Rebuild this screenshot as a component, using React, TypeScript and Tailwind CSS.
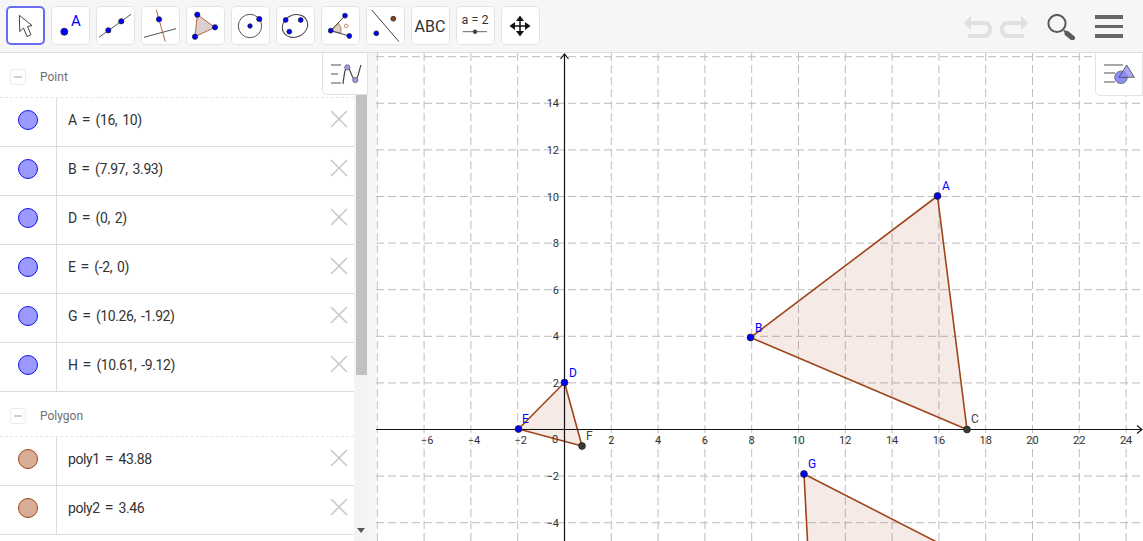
import type { ReactNode } from "react";

const BLUE = "#0000ff";
const BROWN = "#a0441a";
const DARK = "#3a3a3a";

const Dot = ({ x, y, r = 3.5, fill = BLUE }: { x: number; y: number; r?: number; fill?: string }) => (
  <circle cx={x} cy={y} r={r} fill={fill} stroke="#1c1c3c" strokeWidth={0.8} />
);

const toolIcons: ReactNode[] = [
  <path key="move" d="M14.3 9.3 L14.8 25.6 L18.5 22 L22 30.5 L26 28.7 L22.5 20.5 L27 19.5 Z" fill="#fff" stroke="#444" strokeWidth={1} />,
  <g key="point">
    <Dot x={14.3} y={25.7} />
    <text x={26} y={19.7} textAnchor="middle" fontSize={15} fill={BLUE} fontFamily="Roboto, sans-serif">A</text>
  </g>,
  <g key="line">
    <line x1={4} y1={31.3} x2={36} y2={8.3} stroke="#555" strokeWidth={1} />
    <Dot x={13.3} y={24.3} r={2.6} />
    <Dot x={26.3} y={15.3} r={2.6} />
  </g>,
  <g key="perp">
    <line x1={16.3} y1={4} x2={25.3} y2={35.7} stroke="#b5693f" strokeWidth={1} />
    <line x1={4} y1={31.3} x2={36} y2={22.7} stroke="#555" strokeWidth={1} />
    <Dot x={19} y={13.3} r={2.6} />
  </g>,
  <g key="polygon">
    <path d="M12.3 8.7 L30 21.3 L10 30.7 Z" fill="#dbd0cb" stroke="#b5693f" strokeWidth={1} />
    <Dot x={12.3} y={8.7} r={2.6} />
    <Dot x={30} y={21.3} r={2.6} />
    <Dot x={10} y={30.7} r={2.6} />
  </g>,
  <g key="circle">
    <circle cx={20} cy={20} r={11.7} fill="none" stroke="#555" strokeWidth={1} />
    <Dot x={20} y={20} r={2.2} />
    <Dot x={29.3} y={13} r={2.6} />
  </g>,
  <g key="conic">
    <ellipse cx={20} cy={20} rx={13} ry={11} transform="rotate(-25 20 20)" fill="none" stroke="#444" strokeWidth={1} />
    <Dot x={10.7} y={14} r={2.4} />
    <Dot x={25.7} y={14} r={2.4} />
    <Dot x={14.3} y={25.7} r={2.4} />
  </g>,
  <g key="angle">
    <path d="M10.7 24.7 L18.6 17.4 A10.5 10.5 0 0 1 20.8 27.2 Z" fill="#dbd0cb" stroke="#b5693f" strokeWidth={0.8} />
    <line x1={10.7} y1={24.7} x2={25} y2={9.7} stroke="#444" strokeWidth={1} />
    <line x1={10.7} y1={24.7} x2={29.3} y2={30} stroke="#444" strokeWidth={1} />
    <circle cx={26.2} cy={20} r={1.8} fill="none" stroke="#b5693f" strokeWidth={0.8} />
    <Dot x={10.7} y={24.7} r={2.4} />
    <Dot x={25} y={9.7} r={2.4} />
    <Dot x={29.3} y={30} r={2.4} />
  </g>,
  <g key="reflect">
    <line x1={6.7} y1={4} x2={34} y2={35.7} stroke="#444" strokeWidth={1} />
    <Dot x={28.3} y={12.7} r={2.4} fill="#99400f" />
    <Dot x={11.3} y={27.3} r={2.4} />
  </g>,
  <text key="abc" x={20} y={26} textAnchor="middle" fontSize={16} fill="#333" fontFamily="Roboto, sans-serif">ABC</text>,
  <g key="slider">
    <text x={20} y={18} textAnchor="middle" fontSize={12.5} fill="#333" fontFamily="Roboto, sans-serif">a = 2</text>
    <line x1={7.7} y1={25.7} x2={32} y2={25.7} stroke="#666" strokeWidth={1} />
    <circle cx={20} cy={25.7} r={2.2} fill="#444" />
  </g>,
  <g key="pan" fill="#111">
    <path d="M20 12 V28 M12 20 H28" stroke="#111" strokeWidth={1.5} />
    <path d="M20 9.5 L24 15 H16 Z M20 30.5 L24 25 H16 Z M9.5 20 L15 16 V24 Z M30.5 20 L25 16 V24 Z" />
  </g>,
];

const ToolButton = ({ active, children }: { active?: boolean; children: ReactNode }) => (
  <div
    className={
      active
        ? "w-[39px] h-[39px] shrink-0 rounded-[5px] shadow-[inset_0_0_0_2px_#6b6bf0] bg-white"
        : "w-[39px] h-[39px] shrink-0 rounded-[5px] shadow-[inset_0_0_0_1px_#e3e3e3] bg-white"
    }
  >
    <svg viewBox="1 0 39 39" width="39" height="39" className="block">
      {children}
    </svg>
  </div>
);

const Toolbar = () => (
  <div className="h-[53px] shrink-0 flex items-start justify-between pt-[6px] pl-[6px] pr-[20px] bg-[#f6f6f6] border-b border-[#dcdcdc]">
    <div className="flex gap-[6px]">
      {toolIcons.map((icon, i) => (
        <ToolButton key={i} active={i === 0}>
          {icon}
        </ToolButton>
      ))}
    </div>
    <div className="flex items-start gap-[19px] pt-[8px]">
      <div className="flex gap-[8px]">
        <svg width="28" height="26" viewBox="0 0 28 26" fill="none">
          <path d="M2 9 H20 Q26 9 26 15 Q26 22 20 22 H4" stroke="#e0e0e0" strokeWidth={4} />
          <path d="M0 9 L7 1.5 V16.5 Z" fill="#e0e0e0" />
        </svg>
        <svg width="28" height="26" viewBox="0 0 28 26" fill="none">
          <path d="M26 9 H8 Q2 9 2 15 Q2 22 8 22 H24" stroke="#e0e0e0" strokeWidth={4} />
          <path d="M28 9 L21 1.5 V16.5 Z" fill="#e0e0e0" />
        </svg>
      </div>
      <svg width="29" height="26" viewBox="0 0 29 26" fill="none">
        <circle cx="10" cy="9.5" r="8.6" stroke="#5b5b5b" strokeWidth={2} />
        <path d="M17 16.5 L19.5 19" stroke="#5b5b5b" strokeWidth={2} />
        <path d="M20 19.5 L25.5 24" stroke="#5b5b5b" strokeWidth={5} strokeLinecap="round" />
      </svg>
      <div className="flex flex-col gap-[6px] w-[28px] pt-[1px]">
        <div className="h-[3.5px] bg-[#666]" />
        <div className="h-[3.5px] bg-[#666]" />
        <div className="h-[3.5px] bg-[#666]" />
      </div>
    </div>
  </div>
);

const GroupHeader = ({ title }: { title: string }) => (
  <div className="h-[45px] flex items-center pt-[4px] border-b border-dashed border-[#e6e6e6]">
    <div className="ml-[10px] w-[16px] h-[16px] rounded-[3px] border border-[#ececec] flex items-center justify-center">
      <div className="w-[8px] h-[2px] bg-[#d0d0d0]" />
    </div>
    <span className="ml-[14px] text-[12px] text-[#6e6e6e]">{title}</span>
  </div>
);

const ObjectRow = ({ name, value, poly }: { name: string; value: string; poly?: boolean }) => (
  <div className="h-[49px] flex border-b border-[#dcdcdc]">
    <div className="w-[57px] shrink-0 flex items-center justify-center pb-[4px] border-r border-[#dcdcdc]">
      <div
        className={
          poly
            ? "w-[20px] h-[20px] rounded-full bg-[#d8ad98] border border-[#a0441a]"
            : "w-[20px] h-[20px] rounded-full bg-[#9999ff] border border-[#1414e6]"
        }
      />
    </div>
    <div className="flex-1 flex items-center pl-[11px] pb-[4px] text-[14px] tracking-[-0.4px] [word-spacing:2px] text-[#333]">
      <span>{name}</span>
      <span className="mx-[5px] text-[16px] tracking-normal leading-none">=</span>
      <span>{value}</span>
    </div>
    <svg width="18" height="18" viewBox="0 0 18 18" className="mt-[12px] mr-[6px]" stroke="#c8c8c8" strokeWidth={1.6}>
      <path d="M1 1 L17 17 M17 1 L1 17" />
    </svg>
  </div>
);

const AlgebraPanel = () => (
  <div className="w-[368px] shrink-0 relative flex bg-white overflow-hidden">
    <div className="w-[354px] shrink-0">
      <GroupHeader title="Point" />
      <ObjectRow name="A" value="(16, 10)" />
      <ObjectRow name="B" value="(7.97, 3.93)" />
      <ObjectRow name="D" value="(0, 2)" />
      <ObjectRow name="E" value="(-2, 0)" />
      <ObjectRow name="G" value="(10.26, -1.92)" />
      <ObjectRow name="H" value="(10.61, -9.12)" />
      <GroupHeader title="Polygon" />
      <ObjectRow name="poly1" value="43.88" poly />
      <ObjectRow name="poly2" value="3.46" poly />
    </div>
    <div className="flex-1 bg-[#f4f4f4] flex flex-col items-center">
      <div className="w-[11px] h-[322px] bg-[#c1c1c1]" />
      <div className="mt-[153px] w-0 h-0 border-x-[4px] border-x-transparent border-t-[5px] border-t-[#555]" />
    </div>
    <div className="absolute top-0 right-0 w-[46px] h-[42px] bg-white rounded-bl-[5px] border-b border-l border-r border-[#e2e2e2]">
      <svg width="46" height="42" viewBox="323 53 46 42" fill="none">
        <path d="M331 65 H341 M331 74 H338 M331 83 H341" stroke="#a8a8a8" strokeWidth={1.8} />
        <path d="M343 84 Q345 66 347.3 67 C350 67 352 80 355.3 80 C358 80 359 70 361 65" stroke="#444" strokeWidth={1.2} />
        <circle cx={347.3} cy={67.3} r={2.6} fill="#9a9af5" stroke="#555" strokeWidth={0.7} />
        <circle cx={355.3} cy={80} r={2.6} fill="#9a9af5" stroke="#555" strokeWidth={0.7} />
      </svg>
    </div>
  </div>
);

const xAt = (n: number) => 564.5 + 23.4 * n;
const yAt = (n: number) => 429.5 - 23.3 * n;
const gridX = [-8, -6, -4, -2, 2, 4, 6, 8, 10, 12, 14, 16, 18, 20, 22, 24];
const gridY = [16, 14, 12, 10, 8, 6, 4, 2, -2, -4];

const points = [
  { n: "A", x: 937.5, y: 196, lx: 942, ly: 190, c: BLUE },
  { n: "B", x: 750.5, y: 337.5, lx: 755, ly: 332, c: BLUE },
  { n: "C", x: 967, y: 429.5, lx: 971, ly: 423, c: "#444" },
  { n: "D", x: 564.5, y: 382.5, lx: 569, ly: 377, c: BLUE },
  { n: "E", x: 518.5, y: 429, lx: 522, ly: 423, c: BLUE },
  { n: "F", x: 582, y: 446, lx: 586, ly: 440, c: "#444" },
  { n: "G", x: 804, y: 474, lx: 808, ly: 468, c: BLUE },
];

const GraphicsView = () => (
  <div className="relative flex-1 bg-white overflow-hidden">
    <svg viewBox="376 53 767 488" className="block w-full h-full" fontFamily="Roboto, sans-serif">
      {gridX.map((n) => (
        <line key={n} x1={xAt(n)} y1={53} x2={xAt(n)} y2={541} stroke="#bdbdbd" strokeDasharray="8 4" />
      ))}
      {gridY.map((n) => (
        <line key={n} x1={376} y1={yAt(n)} x2={1143} y2={yAt(n)} stroke="#bdbdbd" strokeDasharray="8 4" />
      ))}
      <g fill="#993300" fillOpacity={0.1} stroke={BROWN} strokeWidth={1.6} strokeLinejoin="round">
        <path d="M937.5 196 L750.5 337.5 L967 429.5 Z" />
        <path d="M564.5 382.5 L518.5 429 L582 446 Z" />
        <path d="M804 474 L812.8 642 L1130 641 Z" />
      </g>
      <line x1={376} y1={429.5} x2={1141} y2={429.5} stroke="#111" strokeWidth={1.2} />
      <path d="M1137 425.5 L1142 429.5 L1137 433.5" fill="none" stroke="#111" strokeWidth={1.1} />
      <line x1={564.5} y1={54} x2={564.5} y2={541} stroke="#111" strokeWidth={1.2} />
      <path d="M560.5 59 L564.5 54 L568.5 59" fill="none" stroke="#111" strokeWidth={1.1} />
      <g fontSize={11} fill="#333">
        {gridX.filter((n) => n > -8).map((n) => (
          <text key={n} x={xAt(n) + (n < 0 ? 3 : 0)} y={443.5} textAnchor="middle">
            {n < 0 ? `\u2212${-n}` : n}
          </text>
        ))}
        {gridY.filter((n) => n < 16).map((n) => (
          <text key={n} x={559} y={yAt(n) + 4} textAnchor="end">
            {n < 0 ? `\u2212${-n}` : n}
          </text>
        ))}
        <text x={555} y={443} textAnchor="middle">0</text>
      </g>
      {points.map((p) => (
        <g key={p.n}>
          <circle cx={p.x} cy={p.y} r={3.4} fill={p.c === BLUE ? BLUE : DARK} stroke="#222" strokeWidth={0.8} />
          <text x={p.lx} y={p.ly} fontSize={12} fill={p.c}>{p.n}</text>
        </g>
      ))}
    </svg>
    <div className="absolute top-0 right-0 w-[48px] h-[43px] bg-white rounded-bl-[5px] border-b border-l border-r border-[#e2e2e2]">
      <svg width="48" height="43" viewBox="1096 53 48 43" fill="none">
        <path d="M1104 65 H1123 M1104 73 H1115 M1104 82 H1115" stroke="#a8a8a8" strokeWidth={1.8} />
        <circle cx={1121} cy={77.3} r={6.3} fill="#8c8cf5" stroke="#666" strokeWidth={0.8} />
        <path d="M1126.7 65 L1134.3 77.3 H1119 Z" fill="#8c8cf5" fillOpacity={0.75} stroke="#444" strokeWidth={0.8} />
      </svg>
    </div>
  </div>
);

const App = () => (
  <div
    className="w-[1143px] h-[541px] flex flex-col overflow-hidden bg-white"
    style={{ fontFamily: "Roboto, sans-serif" }}
  >
    <Toolbar />
    <div className="flex-1 flex min-h-0">
      <AlgebraPanel />
      <div className="w-[8px] shrink-0 bg-[#f6f6f6]" />
      <GraphicsView />
    </div>
  </div>
);

export default App;
